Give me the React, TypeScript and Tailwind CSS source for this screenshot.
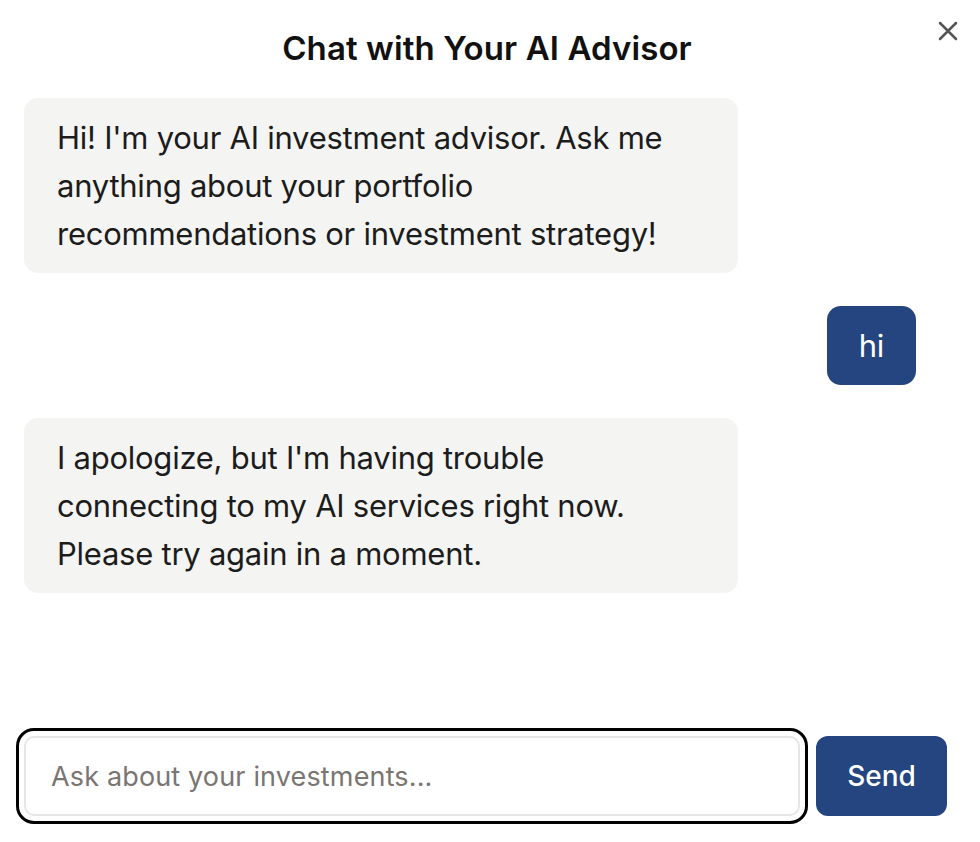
import { useState } from "react";

const messages = [
    { from: "ai", text: "Hi! I'm your AI investment advisor. Ask me anything about your portfolio recommendations or investment strategy!" },
    { from: "user", text: "hi" },
    { from: "ai", text: "I apologize, but I'm having trouble connecting to my AI services right now. Please try again in a moment." },
];

const App = () => {
    const [value, setValue] = useState("");

    return (
        <div className="relative h-[842px] w-full bg-white flex flex-col font-['Inter',sans-serif] text-[#1c1c1c]">
            <button className="absolute right-[21px] top-[20px] w-[22px] h-[22px] flex items-center justify-center text-[#555]">
                <svg width="22" height="22" viewBox="0 0 22 22" fill="none" stroke="currentColor" strokeWidth="2.5" strokeLinecap="round">
                    <path d="M3 3L19 19M19 3L3 19" />
                </svg>
            </button>

            <h2 className="pt-[28px] text-center text-[33px] leading-[40px] font-semibold tracking-[0.1px] text-[#111] pr-[6px]">
                Chat with Your AI Advisor
            </h2>

            <div className="flex-1 flex flex-col gap-[33px] pl-6 pr-[64px] pt-[30px]">
                {messages.map((m, i) => (
                    <div key={i} className={"flex " + (m.from === "user" ? "justify-end" : "justify-start")}>
                        <div
                            className={
                                "max-w-[80%] rounded-[14px] py-[15.5px] text-[31px] leading-[48px] tracking-[-0.25px] " +
                                (m.from === "user"
                                    ? "bg-[#24457f] text-white px-[32px]"
                                    : "bg-[#f4f4f3] text-[#1c1c1c] pl-[33px] pr-[60px]")
                            }
                        >
                            {m.text}
                        </div>
                    </div>
                ))}
            </div>

            <div className="flex items-stretch gap-4 pl-6 pr-[33px] pb-[26px]">
                <input
                    value={value}
                    onChange={(e) => setValue(e.target.value)}
                    placeholder="Ask about your investments..."
                    className="flex-1 h-[80px] rounded-[10px] border-2 border-[#e6e6e6] px-[25px] text-[27px] tracking-[0.15px] text-[#1c1c1c] placeholder:text-[#7a7571] outline-[3px] outline-solid outline-black outline-offset-[5px]"
                />
                <button className="w-[131px] h-[80px] rounded-[12px] bg-[#24457f] text-white text-[28px] font-medium">
                    Send
                </button>
            </div>
        </div>
    );
};

export default App;
